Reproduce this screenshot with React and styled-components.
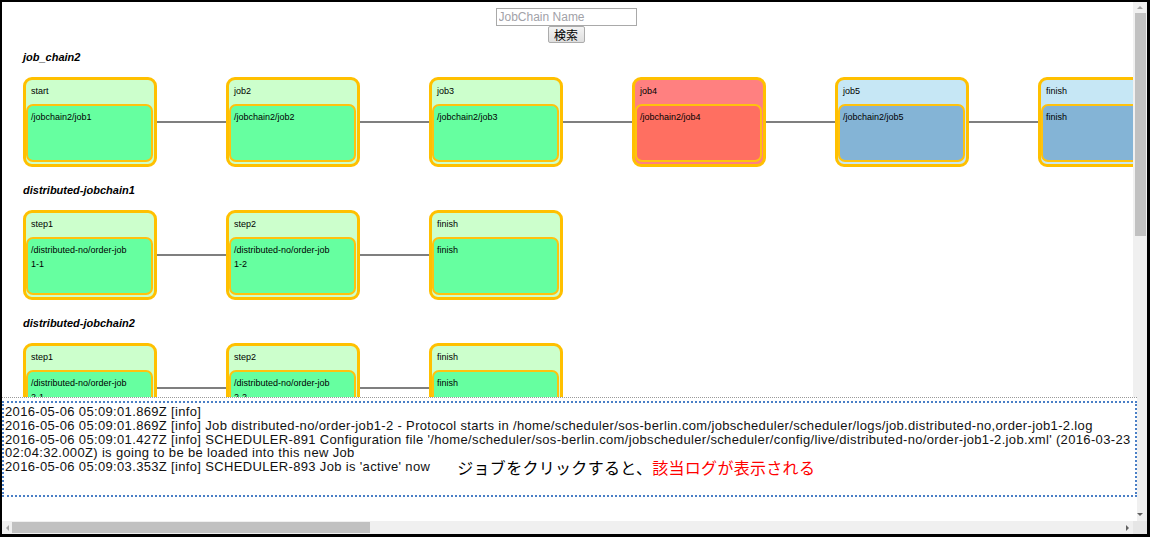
import React from 'react';
import styled, { createGlobalStyle } from 'styled-components';

const GlobalStyle = createGlobalStyle`
  html, body {
    margin: 0;
    padding: 0;
    background: #ffffff;
    overflow: hidden;
  }
`;

const tones = {
  green: { outer: '#ccffcc', inner: '#66ffa0' },
  red: { outer: '#ff8080', inner: '#ff6f61' },
  blue: { outer: '#c6e7f5', inner: '#84b4d6' },
};

const chains = [
  {
    name: 'job_chain2',
    nodes: [
      { state: 'start', job: ['/jobchain2/job1'], tone: 'green' },
      { state: 'job2', job: ['/jobchain2/job2'], tone: 'green' },
      { state: 'job3', job: ['/jobchain2/job3'], tone: 'green' },
      { state: 'job4', job: ['/jobchain2/job4'], tone: 'red' },
      { state: 'job5', job: ['/jobchain2/job5'], tone: 'blue' },
      { state: 'finish', job: ['finish'], tone: 'blue' },
    ],
  },
  {
    name: 'distributed-jobchain1',
    nodes: [
      { state: 'step1', job: ['/distributed-no/order-job', '1-1'], tone: 'green' },
      { state: 'step2', job: ['/distributed-no/order-job', '1-2'], tone: 'green' },
      { state: 'finish', job: ['finish'], tone: 'green' },
    ],
  },
  {
    name: 'distributed-jobchain2',
    nodes: [
      { state: 'step1', job: ['/distributed-no/order-job', '2-1'], tone: 'green' },
      { state: 'step2', job: ['/distributed-no/order-job', '2-2'], tone: 'green' },
      { state: 'finish', job: ['finish'], tone: 'green' },
    ],
  },
];

const logLines = [
  '2016-05-06 05:09:01.869Z [info]',
  '2016-05-06 05:09:01.869Z [info] Job distributed-no/order-job1-2 - Protocol starts in /home/scheduler/sos-berlin.com/jobscheduler/scheduler/logs/job.distributed-no,order-job1-2.log',
  "2016-05-06 05:09:01.427Z [info] SCHEDULER-891 Configuration file '/home/scheduler/sos-berlin.com/jobscheduler/scheduler/config/live/distributed-no/order-job1-2.job.xml' (2016-03-23",
  '02:04:32.000Z) is going to be be loaded into this new Job',
];

const Frame = styled.div`
  width: 1150px;
  height: 537px;
  box-sizing: border-box;
  border-style: solid;
  border-color: #000;
  border-width: 2px 3px 3px 2px;
  display: flex;
  flex-direction: column;
  background: #fff;
`;

const Body = styled.div`
  position: relative;
  flex: 1;
  display: flex;
  min-height: 0;
`;

const Viewport = styled.div`
  flex: 1;
  overflow: hidden;
  font-family: 'Liberation Sans', Arial, sans-serif;
  color: #000;
`;

const SearchBar = styled.div`
  display: flex;
  flex-direction: column;
  align-items: center;
  padding: 6px 3px 0 0;
`;

const SearchInput = styled.input`
  width: 141px;
  height: 18px;
  box-sizing: border-box;
  border: 1px solid #a9a9a9;
  padding: 0 2px;
  font-family: 'Liberation Sans', Arial, sans-serif;
  font-size: 12px;
  outline: none;

  &::placeholder {
    color: #a2a2a8;
  }
`;

const SearchButton = styled.button`
  width: 37px;
  height: 17px;
  box-sizing: border-box;
  padding: 0;
  border: 1px solid #acacac;
  border-radius: 2px;
  background: linear-gradient(#f4f4f4, #dedede);
  font-family: 'Noto Sans CJK JP', sans-serif;
  font-size: 12px;
  line-height: 14px;
  color: #000;
`;

const Chains = styled.div`
  padding: 7px 0 0 21px;
`;

const ChainTitle = styled.div`
  font-size: 11px;
  font-weight: bold;
  font-style: italic;
  line-height: 14px;
  margin-bottom: 13px;
`;

const Row = styled.div`
  display: flex;
  align-items: center;
  margin-bottom: 16px;
`;

const Connector = styled.div`
  flex: 0 0 69px;
  height: 2px;
  background: #7f7f7f;
`;

const Card = styled.div`
  flex: 0 0 134px;
  height: 90px;
  box-sizing: border-box;
  border: 3px solid #ffc000;
  border-radius: 9px;
  background: ${(p) => tones[p.$tone].outer};
  display: flex;
  flex-direction: column;
  padding: 0 1px 2px 0;
`;

const StateLabel = styled.div`
  height: 24px;
  box-sizing: border-box;
  padding: 4px 0 0 5px;
  font-size: 9px;
  line-height: 14px;
`;

const JobBox = styled.div`
  flex: 1;
  border: 2px solid #ffc20e;
  border-radius: 7px;
  background: ${(p) => tones[p.$tone].inner};
  padding: 4px 0 0 3px;
  font-size: 9px;
  line-height: 14px;
`;

const LogPanel = styled.div`
  position: absolute;
  left: 0;
  right: 10px;
  bottom: 0;
  height: 124px;
  box-sizing: border-box;
  background: #fff;
  border-top: 1px dotted #9a9a9a;
  padding-top: 3px;
`;

const LogBox = styled.div`
  height: 96px;
  box-sizing: border-box;
  border: 2px dotted #4a7fc6;
  padding: 2px 0 0 1px;
  font-family: 'Liberation Sans', Arial, sans-serif;
  font-size: 13px;
  letter-spacing: 0.34px;
  line-height: 13.75px;
  color: #111;
`;

const LogLine = styled.div`
  height: 13.75px;
  white-space: nowrap;
  display: flex;
  align-items: center;
`;

const Note = styled.span`
  font-family: 'Noto Sans CJK JP', sans-serif;
  font-size: 16px;
  letter-spacing: 0.3px;
  line-height: 14px;
  color: ${(p) => (p.$red ? '#ff0000' : '#000')};
  margin-left: ${(p) => (p.$red ? '0' : '27px')};
`;

const VScroll = styled.div`
  flex: 0 0 14px;
  background: #f0f0f0;
  display: flex;
  flex-direction: column;
  align-items: center;
`;

const VThumb = styled.div`
  width: 11px;
  height: 223px;
  background: #c1c1c1;
`;

const ArrowBox = styled.div`
  flex: 0 0 ${(p) => p.$size}px;
  width: 100%;
  display: flex;
  align-items: center;
  justify-content: center;
`;

const Tri = styled.div`
  width: 0;
  height: 0;
  border-style: solid;
  border-color: transparent;
  ${(p) => p.$dir === 'up' && 'border-width: 0 3px 3px 3px; border-bottom-color: #a3a3a3;'}
  ${(p) => p.$dir === 'down' && 'border-width: 3px 3px 0 3px; border-top-color: #606060;'}
  ${(p) => p.$dir === 'left' && 'border-width: 3px 3px 3px 0; border-right-color: #a3a3a3;'}
  ${(p) => p.$dir === 'right' && 'border-width: 3px 0 3px 3px; border-left-color: #606060;'}
`;

const Spacer = styled.div`
  flex: 1;
`;

const BottomBar = styled.div`
  flex: 0 0 13px;
  display: flex;
`;

const HScroll = styled.div`
  flex: 1;
  display: flex;
  align-items: center;
  background: #f0f0f0;
`;

const HThumb = styled.div`
  width: 358px;
  height: 11px;
  background: #c1c1c1;
`;

const Corner = styled.div`
  flex: 0 0 14px;
  background: #e6e6e6;
`;

const ChainView = ({ chain }) => (
  <>
    <ChainTitle>{chain.name}</ChainTitle>
    <Row>
      {chain.nodes.map((node, i) => (
        <React.Fragment key={i}>
          {i > 0 && <Connector />}
          <Card $tone={node.tone}>
            <StateLabel>{node.state}</StateLabel>
            <JobBox $tone={node.tone}>
              {node.job.map((line) => (
                <div key={line}>{line}</div>
              ))}
            </JobBox>
          </Card>
        </React.Fragment>
      ))}
    </Row>
  </>
);

export default function App() {
  return (
    <Frame>
      <GlobalStyle />
      <Body>
        <Viewport>
          <SearchBar>
            <SearchInput placeholder="JobChain Name" />
            <SearchButton>検索</SearchButton>
          </SearchBar>
          <Chains>
            {chains.map((chain) => (
              <ChainView key={chain.name} chain={chain} />
            ))}
          </Chains>
        </Viewport>
        <VScroll>
          <ArrowBox $size={11}>
            <Tri $dir="up" />
          </ArrowBox>
          <VThumb />
          <Spacer />
          <ArrowBox $size={13}>
            <Tri $dir="down" />
          </ArrowBox>
        </VScroll>
        <LogPanel>
          <LogBox>
            {logLines.map((line) => (
              <LogLine key={line}>{line}</LogLine>
            ))}
            <LogLine>
              <span>2016-05-06 05:09:03.353Z [info] SCHEDULER-893 Job is 'active' now</span>
              <Note>ジョブをクリックすると、</Note>
              <Note $red>該当ログが表示される</Note>
            </LogLine>
          </LogBox>
        </LogPanel>
      </Body>
      <BottomBar>
        <HScroll>
          <ArrowBox $size={10}>
            <Tri $dir="left" />
          </ArrowBox>
          <HThumb />
          <Spacer />
          <ArrowBox $size={12}>
            <Tri $dir="right" />
          </ArrowBox>
        </HScroll>
        <Corner />
      </BottomBar>
    </Frame>
  );
}
